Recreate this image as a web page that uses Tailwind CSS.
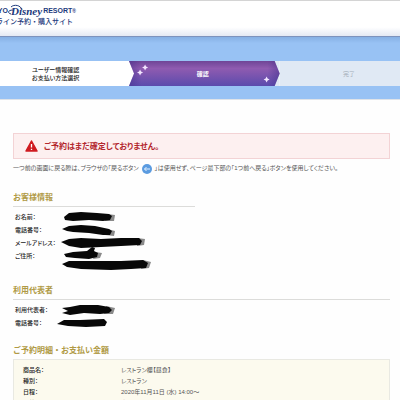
<!DOCTYPE html>
<html lang="ja">
<head>
    <meta charset="UTF-8">
    <meta name="viewport" content="width=device-width, initial-scale=1.0">
    <title>東京ディズニーリゾート・オンライン予約・購入サイト</title>
    <script src="https://cdn.jsdelivr.net/npm/@tailwindcss/browser@4"></script>
    <style>
        body {
            font-family: 'Liberation Sans', 'Noto Sans CJK JP', sans-serif;
            font-feature-settings: "palt";
        }
        /* headings and the site name are set solid */
        h2, header {
            font-feature-settings: normal;
        }
    </style>
</head>
<body class="min-h-screen overflow-x-hidden bg-[#fefefe] text-[6px] leading-[13px] text-[#555]">

    <!-- Site header -->
    <header class="h-[37px] overflow-hidden border-t border-b border-t-[#d4d4d4] border-b-[#7d93bd] bg-linear-to-b from-white from-75% to-[#e4e9f3]">
        <a href="#" class="flex w-[76px] flex-col items-end text-[#1d3a7c]">
            <span class="mt-[3px] flex items-center whitespace-nowrap text-[7px] leading-[14px] font-bold">
                <span>TOKYO</span>
                <span class="relative mx-px pl-[2px] font-['Liberation_Serif'] text-[11px] italic">
                    <svg class="absolute -left-px top-0 h-[14px] w-[34px]" viewBox="0 0 34 14" fill="none" stroke="currentColor" stroke-width="1">
                        <path d="M3 10 C-1 9 0 6 5 6 M3 3 C6 0 13 1 14 6"/>
                    </svg>
                    Disney
                </span>
                <span>RESORT</span><span class="text-[5px]">®</span>
            </span>
            <span class="mr-[3px] whitespace-nowrap text-[7px] leading-[8px] font-medium">オンライン予約・購入サイト</span>
        </a>
    </header>

    <!-- Progress steps -->
    <nav class="border-b border-[#dfe3e8] bg-linear-to-b from-[#86b0e4] to-[#98c2f4] to-10% pt-[24px] pb-[13px]">
        <ol class="flex h-[25px] bg-[#e0e9f4] text-center leading-[8px]">
            <li class="flex w-1/3 items-center justify-center bg-white pr-[22px] font-medium text-[#222]">ユーザー情報確認<br>お支払い方法選択</li>
            <li class="relative -ml-[4px] flex grow items-center justify-center bg-white pr-[4px]">
                <svg class="absolute inset-0 h-full w-full" viewBox="0 0 150 25" preserveAspectRatio="none">
                    <defs>
                        <linearGradient id="step" x1="0" y1="0" x2="0" y2="1">
                            <stop offset="0" stop-color="#6f4596"/>
                            <stop offset=".3" stop-color="#8f5bb0"/>
                            <stop offset="1" stop-color="#5b4bad"/>
                        </linearGradient>
                        <linearGradient id="edge">
                            <stop offset="0" stop-color="#43308c" stop-opacity=".5"/>
                            <stop offset=".08" stop-color="#43308c" stop-opacity="0"/>
                            <stop offset=".92" stop-color="#43308c" stop-opacity="0"/>
                            <stop offset="1" stop-color="#43308c" stop-opacity=".5"/>
                        </linearGradient>
                    </defs>
                    <path d="M140 0H150V25H140Z" fill="#e0e9f4"/>
                    <path d="M0 0H145L150 12.500L145 25H0L5 12.500Z" fill="url(#step)"/>
                    <path d="M0 0H145L150 12.500L145 25H0L5 12.500Z" fill="url(#edge)"/>
                    <g fill="#f3e6ff">
                        <path d="M11 8.500l1 2 2 1-2 1-1 2-1-2-2-1 2-1z"/>
                        <path d="M16 3.500l1 2 2 1-2 1-1 2-1-2-2-1 2-1z"/>
                        <path d="M137 15.500l1 2 2 1-2 1-1 2-1-2-2-1 2-1z"/>
                    </g>
                </svg>
                <span class="relative font-bold text-white">確認</span>
            </li>
            <li class="flex w-[30%] items-center justify-center pl-[18px] text-[#a5adb8]">完了</li>
        </ol>
    </nav>

    <main class="pt-[33px] pr-[10px] pl-[13px]">
        <!-- Notice -->
        <div class="flex h-[26px] items-center gap-[6px] border border-[#f3d3d5] bg-[#fdf0f0] pl-[11px] text-[8px] font-bold text-[#b3272d]">
            <svg class="h-[12px] w-[13px]" viewBox="0 0 13 12">
                <path d="M6.500 1L12 11H1Z" fill="#cf1b20" stroke="#cf1b20" stroke-width="1.500" stroke-linejoin="round"/>
                <path d="M6.500 4V7.500M6.500 8.700V10" stroke="#fff" stroke-width="1.300"/>
            </svg>
            ご予約はまだ確定しておりません。
        </div>
        <p class="mt-[3px] flex items-center gap-[3px] whitespace-nowrap">
            一つ前の画面に戻る際は、ブラウザの「戻るボタン
            <svg class="h-[10px] w-[10px]" viewBox="0 0 10 10">
                <circle cx="5" cy="5" r="5" fill="#5b9be0"/>
                <path d="M8 5H2.500M4.500 3L2.500 5L4.500 7" fill="none" stroke="#e4f1ff"/>
            </svg>
            」は使用せず、ページ最下部の「1つ前へ戻る」ボタンを使用してください。
        </p>

        <!-- Customer -->
        <section class="mt-[15px]">
            <h2 class="w-[182px] border-b border-[#dcdcda] pb-px text-[8px] leading-[15px] font-bold text-[#b09a45]">お客様情報</h2>
            <dl class="relative mt-[4px] pl-[2px] font-medium text-[#222]">
                <dt>お名前：</dt>
                <dt>電話番号：</dt>
                <dt>メールアドレス：</dt>
                <dt>ご住所：</dt>
                <dd class="absolute top-0 left-[48px]">
                    <svg class="h-[60px] w-[92px]" viewBox="0 0 92 60">
                        <g fill="#8a8a8a">
                            <path d="M46 3L54 4 53 10 44 10Z"/>
                            <path d="M46 18L54 20 53 25 44 24Z"/>
                            <path d="M76 27L84 28 83 34 76 35Z"/>
                            <path d="M34 41L41 42 39 47 32 48Z"/>
                            <path d="M82 49L90 51 88 57 80 58Z"/>
                        </g>
                        <g fill="#080808">
                            <path d="M3 6L8 2 20 1 36 2 48 3 51 5 49 9 42 10 28 9 12 10 4 9Z"/>
                            <path d="M1 18L8 15 20 14 34 15 48 18 51 20 49 24 42 24 28 22 12 21 6 20Z"/>
                            <path d="M0 31L8 28 20 27 40 28 60 27 78 27 81 30 79 34 60 35 40 36 20 37 8 35Z"/>
                            <path d="M3 43L12 41 26 40 31 36 34 37 33 40 37 42 36 46 28 48 14 47 5 46Z"/>
                            <path d="M1 53L8 50 30 50 60 50 82 49 87 52 85 57 70 58 50 59 20 58 6 56Z"/>
                        </g>
                    </svg>
                </dd>
            </dl>
        </section>

        <!-- Representative -->
        <section class="mt-[20px]">
            <h2 class="border-b border-[#dcdcda] pb-px text-[8px] leading-[15px] font-bold text-[#b09a45]">利用代表者</h2>
            <dl class="relative mt-[4px] pl-[2px] font-medium text-[#222]">
                <dt>利用代表者：</dt>
                <dt>電話番号：</dt>
                <dd class="absolute top-0 left-[43px]">
                    <svg class="h-[26px] w-[60px]" viewBox="0 0 60 26">
                        <path d="M50 2L59 4 57 10 48 10Z" fill="#8a8a8a"/>
                        <path d="M6 4L14 3 24 1 42 1 53 3 56 6 53 9 44 10 28 9 14 11 6 9 12 7Z" fill="#080808"/>
                        <path d="M1 20L8 16 24 16 48 15 51 18 49 22 30 23 12 22Z" fill="#080808"/>
                    </svg>
                </dd>
            </dl>
        </section>

        <!-- Reservation details -->
        <section class="mt-[13px]">
            <h2 class="text-[8px] leading-[16px] font-bold text-[#b09a45]">ご予約明細・お支払い金額</h2>
            <dl class="grid grid-cols-[98px_1fr] border border-[#e9e9e2] bg-[#fcfaee] py-[5px] pl-[9px] leading-[11px]">
                <dt class="font-medium text-[#222]">商品名：</dt><dd>レストラン櫻【昼食】</dd>
                <dt class="font-medium text-[#222]">種別：</dt><dd>レストラン</dd>
                <dt class="font-medium text-[#222]">日程：</dt><dd>2020年11月11日 (水) 14:00～</dd>
                <dt class="font-medium text-[#222]">人数：</dt><dd>大人</dd>
            </dl>
        </section>
    </main>
</body>
</html>
